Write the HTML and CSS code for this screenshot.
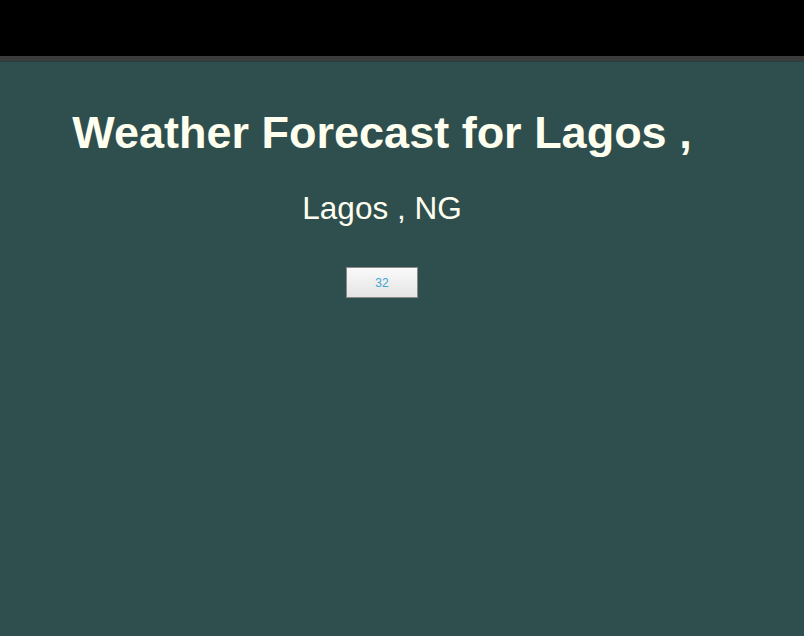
FILE: index.html
```html
<!DOCTYPE html>
<html>
<head>
<meta charset="utf-8">
<link rel="stylesheet" href="styles.css">
</head>
<body>
<div class="topbar"></div>
<div class="divider"></div>
<main class="page">
  <h1 class="title">Weather Forecast for Lagos ,</h1>
  <h2 class="location">Lagos , NG</h2>
  <button class="temp">32</button>
</main>
</body>
</html>
```
FILE: styles.css
```css
html, body {
  margin: 0;
  padding: 0;
  background: #2f4f4f;
  font-family: "Liberation Sans", Arial, sans-serif;
}
.topbar {
  height: 56px;
  background: #000;
}
.divider {
  height: 5px;
  background: #3c3c3c;
  border-bottom: 1px solid #263f3f;
}
.page {
  width: 764px;
  display: flex;
  flex-direction: column;
  align-items: center;
  color: #fffff0;
}
.title {
  margin: 47px 0 0 0;
  font-size: 45px;
  line-height: 48px;
  font-weight: bold;
}
.location {
  margin: 34px 0 0 0;
  font-size: 31.5px;
  line-height: 34px;
  font-weight: normal;
}
.temp {
  margin-top: 42px;
  width: 72px;
  height: 31px;
  border: 1px solid #8a8a8a;
  background: linear-gradient(#fafafa, #e4e4e4);
  color: #3fa3d3;
  font-family: "Liberation Sans", Arial, sans-serif;
  font-size: 12px;
  padding: 0;
}
```
